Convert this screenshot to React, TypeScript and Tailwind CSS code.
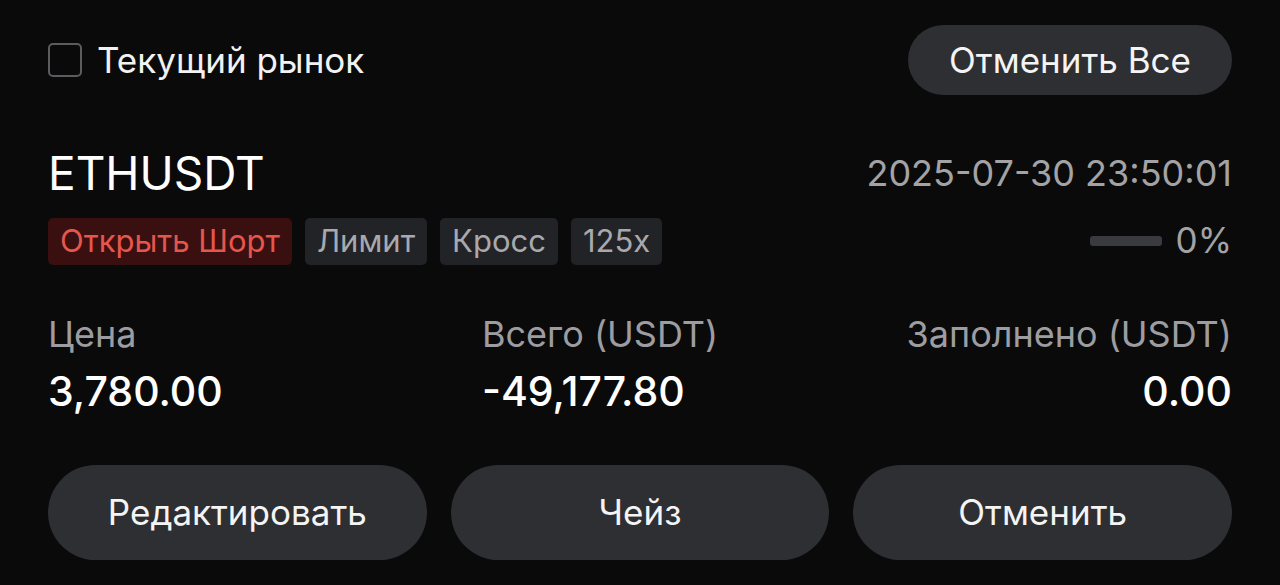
export default function App() {
  const tags = ["Лимит", "Кросс", "125x"];

  return (
    <div
      className="w-[1280px] h-[585px] bg-[#0a0a0a] text-white px-12 pt-[25px] overflow-hidden"
      style={{ fontFamily: "Inter, 'Noto Sans', sans-serif" }}
    >
      {/* Header */}
      <div className="flex items-center justify-between h-[70px]">
        <label className="flex items-center gap-[15px]">
          <span className="w-[34px] h-[34px] rounded-[5px] border-2 border-[#5b5c60]" />
          <span className="text-[35px] leading-none text-[#f2f2f2]">Текущий рынок</span>
        </label>
        <button className="h-[70px] px-[41px] rounded-full bg-[#2e2f33] text-[35px] leading-none text-[#f4f4f4]">
          Отменить Все
        </button>
      </div>

      {/* Symbol row */}
      <div className="flex justify-between mt-[55px]">
        <div className="flex flex-col">
          <div className="text-[46px] leading-none">ETHUSDT</div>
          <div className="flex gap-[13px] mt-[22px]">
            <span className="h-[47px] px-[12px] flex items-center rounded-[5px] bg-[#3a0f10] text-[31px] text-[#e5564d]">
              Открыть Шорт
            </span>
            {tags.map((t) => (
              <span
                key={t}
                className="h-[47px] px-[12px] flex items-center rounded-[5px] bg-[#222327] text-[31px] text-[#a9a9ad]"
              >
                {t}
              </span>
            ))}
          </div>
        </div>
        <div className="flex flex-col items-end">
          <div className="text-[36px] leading-none text-[#a3a3a6] mt-[5px]">2025-07-30 23:50:01</div>
          <div className="flex items-center gap-[14px] mt-[32px]">
            <div className="w-[72px] h-[10px] rounded-[3px] bg-[#3a3b3f]" />
            <span className="text-[35px] leading-none text-[#a3a3a6]">0%</span>
          </div>
        </div>
      </div>

      {/* Values */}
      <div className="grid grid-cols-[434px_1fr_auto] mt-[51px]">
        <div>
          <div className="text-[36px] leading-none text-[#9d9da1]">Цена</div>
          <div className="text-[41px] leading-none font-medium mt-[19px]">3,780.00</div>
        </div>
        <div>
          <div className="text-[36px] leading-none text-[#9d9da1]">Всего (USDT)</div>
          <div className="text-[41px] leading-none font-medium mt-[19px]">-49,177.80</div>
        </div>
        <div className="text-right">
          <div className="text-[36px] leading-none text-[#9d9da1]">Заполнено (USDT)</div>
          <div className="text-[41px] leading-none font-medium mt-[19px]">0.00</div>
        </div>
      </div>

      {/* Actions */}
      <div className="grid grid-cols-3 gap-[24px] mt-[53px]">
        {["Редактировать", "Чейз", "Отменить"].map((b) => (
          <button
            key={b}
            className="h-[95px] rounded-full bg-[#2e2f33] text-[35px] text-[#f4f4f4]"
          >
            {b}
          </button>
        ))}
      </div>
    </div>
  );
}
